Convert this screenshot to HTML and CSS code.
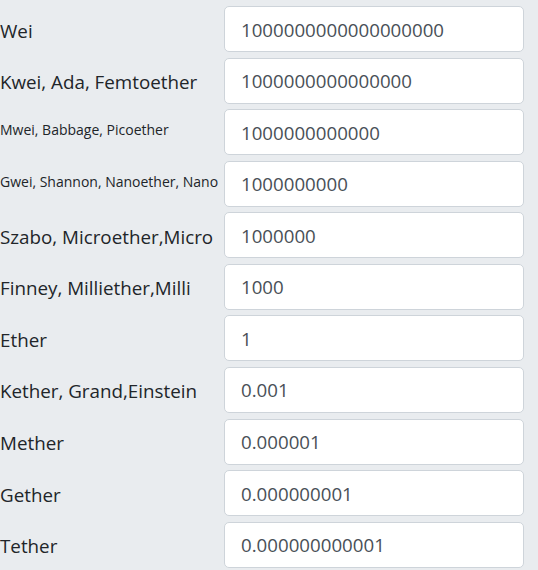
FILE: index.html
```html
<!DOCTYPE html>
<html>
<head>
<meta charset="utf-8">
<link rel="stylesheet" href="styles.css">
</head>
<body>
<div class="units">
  <label class="unit-label">Wei</label>
  <input class="unit-input" type="text" value="1000000000000000000">
  <label class="unit-label">Kwei, Ada, Femtoether</label>
  <input class="unit-input" type="text" value="1000000000000000">
  <label class="unit-label small">Mwei, Babbage, Picoether</label>
  <input class="unit-input" type="text" value="1000000000000">
  <label class="unit-label small">Gwei, Shannon, Nanoether, Nano</label>
  <input class="unit-input" type="text" value="1000000000">
  <label class="unit-label">Szabo, Microether,Micro</label>
  <input class="unit-input" type="text" value="1000000">
  <label class="unit-label">Finney, Milliether,Milli</label>
  <input class="unit-input" type="text" value="1000">
  <label class="unit-label">Ether</label>
  <input class="unit-input" type="text" value="1">
  <label class="unit-label">Kether, Grand,Einstein</label>
  <input class="unit-input" type="text" value="0.001">
  <label class="unit-label">Mether</label>
  <input class="unit-input" type="text" value="0.000001">
  <label class="unit-label">Gether</label>
  <input class="unit-input" type="text" value="0.000000001">
  <label class="unit-label">Tether</label>
  <input class="unit-input" type="text" value="0.000000000001">
</div>
</body>
</html>
```

FILE: styles.css
```css
html, body {
  margin: 0;
  padding: 0;
  background: #e9ecef;
}
body {
  font-family: "Open Sans", "Noto Sans", sans-serif;
  color: #212529;
}
.units {
  display: grid;
  grid-template-columns: 224px 300px;
  grid-auto-rows: 46px;
  row-gap: 5.57px;
  padding-top: 6px;
}
.unit-label {
  display: flex;
  align-items: center;
  padding-top: 3px;
  box-sizing: border-box;
  font-size: 18.8px;
  white-space: nowrap;
  overflow: visible;
}
.unit-label.small {
  font-size: 14px;
  align-items: flex-start;
  padding-top: 11px;
}
.unit-input {
  box-sizing: border-box;
  height: 46px;
  width: 300px;
  margin: 0;
  padding: 0 16px;
  border: 1px solid #ced4da;
  border-radius: 5px;
  background: #fff;
  color: #495057;
  font-family: "Open Sans", "Noto Sans", sans-serif;
  font-size: 18.7px;
  outline: none;
}
```
